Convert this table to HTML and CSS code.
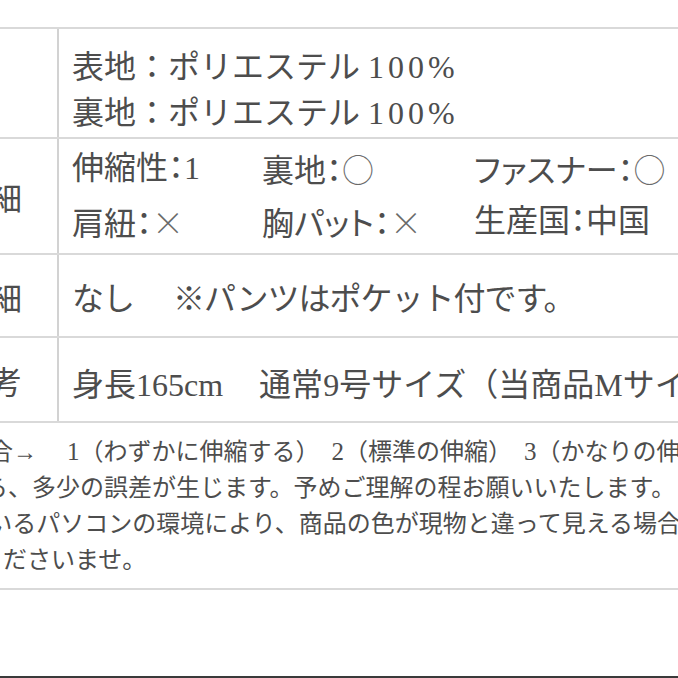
FILE: index.html
```html
<!DOCTYPE html>
<html lang="ja">
<head>
<meta charset="utf-8">
<link rel="stylesheet" href="styles.css">
</head>
<body>
<div class="page">
  <div class="spec">
    <div class="row r1">
      <div class="label"></div>
      <div class="value">
        <div>表地：ポリエステル <span class="num wide">100%</span></div>
        <div>裏地：ポリエステル <span class="num wide">100%</span></div>
      </div>
    </div>
    <div class="row r2">
      <div class="label">詳細</div>
      <div class="value grid3">
        <div>伸縮性：<span class="num">1</span></div>
        <div>裏地：<span class="sym">○</span></div>
        <div>ファスナー：<span class="sym">○</span></div>
        <div>肩紐：<span class="sym">×</span></div>
        <div>胸パット：<span class="sym">×</span></div>
        <div>生産国：中国</div>
      </div>
    </div>
    <div class="row r3">
      <div class="label">詳細</div>
      <div class="value">
        <div class="tight"><span class="gap">なし</span>※パンツはポケット付です。</div>
      </div>
    </div>
    <div class="row r4">
      <div class="label">備考</div>
      <div class="value">
        <div>身長<span class="num">165cm</span><span class="gap2"></span>通常<span class="num">9</span>号サイズ（当商品<span class="num">M</span>サイズ着用）</div>
      </div>
    </div>
  </div>
  <div class="notes">
    <p>※伸縮性の度合→　 <span class="num">1</span>（わずかに伸縮する）　<span class="num">2</span>（標準の伸縮）　<span class="num">3</span>（かなりの伸縮）</p>
    <p class="shift-sm">※採寸ですから、多少の誤差が生じます。予めご理解の程お願いいたします。</p>
    <p>※ご覧頂いているパソコンの環境により、商品の色が現物と違って見える場合がございます。</p>
    <p class="shift">※予めご了承くださいませ。</p>
  </div>
  <div class="edge"></div>
</div>
</body>
</html>
```

FILE: styles.css
```css
* {
  box-sizing: border-box;
}

html,
body {
  margin: 0;
  padding: 0;
  background: #ffffff;
  overflow: hidden;
}

.page {
  width: 678px;
  height: 678px;
  display: flex;
  flex-direction: column;
  color: #4d4d4d;
  font-family: "Liberation Serif", "Noto Sans CJK JP", serif;
}

.spec {
  margin-top: 27px;
  margin-left: -60px;
  border-top: 2px solid #d9d9d9;
  font-size: 32px;
}

.row {
  display: flex;
  border-bottom: 2px solid #d9d9d9;
}

.r1 { height: 110px; }
.r2 { height: 116px; }
.r3 { height: 83px; }
.r4 { height: 85px; }

.label {
  flex: none;
  width: 119px;
  border-right: 2px solid #d2d2d2;
  padding-right: 35px;
  display: flex;
  align-items: center;
  justify-content: flex-end;
  white-space: nowrap;
  overflow: hidden;
}

.value {
  flex: 1;
  padding-left: 13px;
  display: flex;
  flex-direction: column;
  justify-content: center;
  white-space: nowrap;
  overflow: hidden;
}

.r1 .value {
  justify-content: flex-start;
  padding-top: 15px;
  line-height: 46px;
}

.r4 .value {
  padding-top: 4px;
}

.grid3 {
  display: grid;
  grid-template-columns: 190px 212px auto;
  justify-content: start;
  align-content: center;
  line-height: 50px;
  font-feature-settings: "palt";
}

.tight {
  letter-spacing: -1px;
}

.num {
  font-family: "Liberation Serif", serif;
  font-size: 32px;
  letter-spacing: 0;
}

.num.wide {
  letter-spacing: 4px;
}

.sym {
  font-family: "Noto Sans CJK JP", sans-serif;
  font-weight: 300;
  color: #6a6a6a;
}

.gap {
  margin-right: 39px;
}

.gap2 {
  display: inline-block;
  width: 36px;
}

.notes {
  margin-left: -155px;
  padding: 11px 0 10px;
  border-bottom: 2px solid #d9d9d9;
  font-size: 24px;
  line-height: 36px;
  white-space: nowrap;
}

.notes p {
  margin: 0;
}

.notes .shift {
  text-indent: -10px;
}

.notes .shift-sm {
  text-indent: -5px;
}

.notes .num {
  font-size: 25px;
}

.edge {
  margin-top: auto;
  height: 2px;
  background: #3a3a3a;
}
```
